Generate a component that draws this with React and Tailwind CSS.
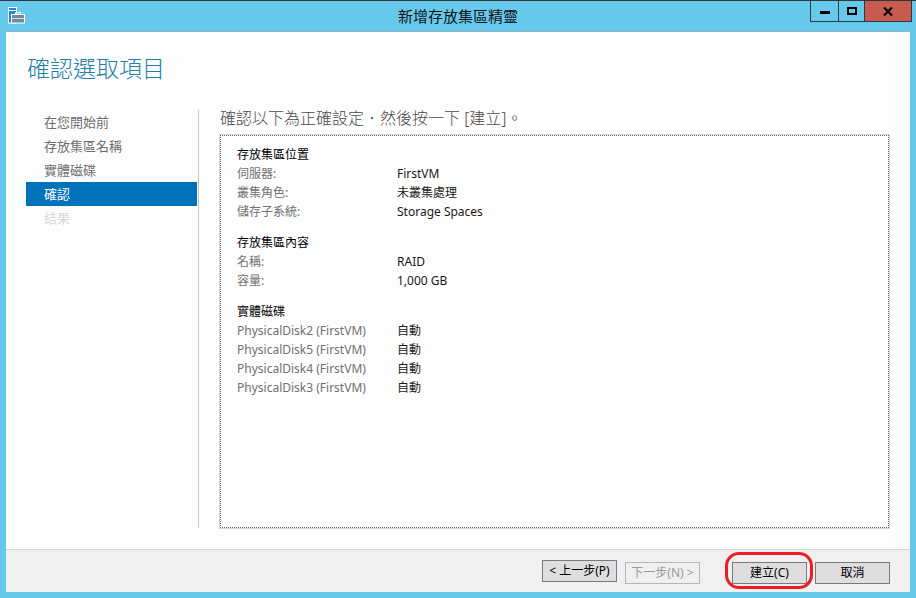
import React from "react";

const navItems = [
  { label: "在您開始前", tone: "text-[#6d6d6d]" },
  { label: "存放集區名稱", tone: "text-[#6d6d6d]" },
  { label: "實體磁碟", tone: "text-[#6d6d6d]" },
  { label: "確認", tone: "bg-[#0072bc] text-white" },
  { label: "結果", tone: "text-[#d8d8d8]" },
];

const Row = ({ name, value, heading }) => (
  <div className="flex h-[19px] items-center">
    <span className={`w-[160px] ${heading ? "text-black" : "text-[#707070]"}`}>{name}</span>
    {value && <span className="text-[#1a1a1a]">{value}</span>}
  </div>
);

const WizardButton = ({ children, disabled }) => (
  <button
    className={`h-[22px] w-[75px] border text-[12px] ${
      disabled ? "border-[#b5b5b5] bg-[#f0f0f0] text-[#9a9a9a]" : "border-[#7a7a7a] bg-[#dedede] text-black"
    }`}
  >
    {children}
  </button>
);

const AppIcon = () => (
  <svg width="17" height="17" viewBox="0 0 17 17" fill="none">
    <rect x="0.5" y="0.5" width="8" height="15.5" fill="#1f86e0" stroke="#fff" />
    <rect x="1" y="3" width="7" height="1" fill="#fff" />
    <rect x="3.5" y="7.5" width="13" height="8.5" fill="#74899b" stroke="#fff" />
    <path d="M7.5 7.5V5.5h5v2" stroke="#fff" />
    <path d="M4 11.5h12" stroke="#d5dde3" />
  </svg>
);

export default function App() {
  return (
    <div className="relative flex h-[598px] w-[916px] flex-col bg-[#66c9ec] font-['Noto_Sans','Noto_Sans_CJK_TC',sans-serif]">
      {/* title bar */}
      <div className="relative flex h-[31px] shrink-0 items-center justify-center border-t border-[#33373a]">
        <div className="absolute left-[8px] top-[6px]">
          <AppIcon />
        </div>
        <span className="text-[15px] text-[#111]">新增存放集區精靈</span>
        <div className="absolute right-[4px] top-0 flex h-[21px] border-b border-x border-[#2f3a40]">
          <div className="flex w-[28px] items-center justify-center border-r border-[#2f3a40]">
            <div className="mt-[3px] h-[3px] w-[10px] bg-black" />
          </div>
          <div className="flex w-[26px] items-center justify-center border-r border-[#2f3a40]">
            <div className="h-[8px] w-[10px] border-2 border-black" />
          </div>
          <div className="flex w-[46px] items-center justify-center bg-[#c75b50]">
            <svg width="10" height="9" viewBox="0 0 10 9">
              <path d="M1 0.5l8 8M9 0.5l-8 8" stroke="#000" strokeWidth="2.2" />
            </svg>
          </div>
        </div>
      </div>

      {/* window body */}
      <div className="mx-[6px] mb-[6px] flex flex-1 flex-col border-t border-[#8fb3c4] bg-[#fdfdfd]">
        <h1 className="h-[78px] shrink-0 pl-[21px] pt-[18px] text-[23px] leading-[36px] font-light text-[#1f7fa8]">
          確認選取項目
        </h1>

        <div className="flex min-h-0 flex-1">
          <div className="flex w-[194px] shrink-0 pl-[20px]">
            <ul className="w-[171px] text-[13px]">
              {navItems.map((item) => (
                <li key={item.label} className={`flex h-[24px] items-center pl-[18px] pt-[2px] ${item.tone}`}>
                  {item.label}
                </li>
              ))}
            </ul>
            <div className="ml-px h-[418px] w-px bg-[#c8c8c8]" />
          </div>

          <div className="ml-[20px] flex w-[669px] flex-col">
            <p className="h-[25px] shrink-0 text-[16px] leading-[17px] font-light text-[#4a4a4a]">
              確認以下為正確設定．然後按一下 [建立]。
            </p>
            <div className="h-[393px] border border-dotted border-[#666] pl-[16px] pt-[9px] text-[12px] outline outline-[#d4d4d4]">
              <Row heading name="存放集區位置" />
              <Row name="伺服器:" value="FirstVM" />
              <Row name="叢集角色:" value="未叢集處理" />
              <Row name="儲存子系統:" value="Storage Spaces" />
              <div className="h-[12px]" />
              <Row heading name="存放集區內容" />
              <Row name="名稱:" value="RAID" />
              <Row name="容量:" value="1,000 GB" />
              <div className="h-[12px]" />
              <Row heading name="實體磁碟" />
              <Row name="PhysicalDisk2 (FirstVM)" value="自動" />
              <Row name="PhysicalDisk5 (FirstVM)" value="自動" />
              <Row name="PhysicalDisk4 (FirstVM)" value="自動" />
              <Row name="PhysicalDisk3 (FirstVM)" value="自動" />
            </div>
          </div>
        </div>

        {/* footer */}
        <div className="flex h-[43px] shrink-0 items-center justify-end border-t border-[#d8d8d8] bg-[#f0f0f0] pr-[20px]">
          <WizardButton>&lt; 上一步(P)</WizardButton>
          <div className="ml-[8px]">
            <WizardButton disabled>下一步(N) &gt;</WizardButton>
          </div>
          <div className="ml-[32px]">
            <WizardButton>建立(C)</WizardButton>
          </div>
          <div className="ml-[8px]">
            <WizardButton>取消</WizardButton>
          </div>
        </div>
      </div>

      {/* red annotation around the create button */}
      <div className="absolute left-[725px] top-[552px] h-[37px] w-[88px] rounded-[14px] border-[3px] border-[#ee1c25]" />
    </div>
  );
}
